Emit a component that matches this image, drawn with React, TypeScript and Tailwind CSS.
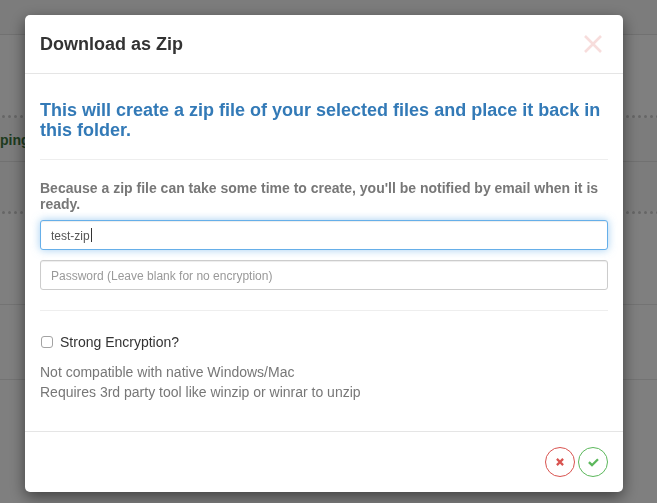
import React, { useState } from 'react';

function DottedRule() {
  return (
    <svg className="block w-full h-[3px]" aria-hidden="true">
      <defs>
        <pattern id="dots" width="6" height="3" patternUnits="userSpaceOnUse">
          <circle cx="3.5" cy="1.5" r="1.5" fill="#cccccc" />
        </pattern>
      </defs>
      <rect width="100%" height="3" fill="url(#dots)" />
    </svg>
  );
}

function FileListPage() {
  return (
    <div className="min-h-screen bg-white" aria-hidden="true">
      <div className="h-[35px] bg-[#f8f8f8] border-b border-[#e2e2e2]" />
      <div className="h-20" />
      <DottedRule />
      <div className="h-11 flex items-center bg-[#f9f9f9] border-b border-[#e2e2e2] text-sm font-bold text-[#3c763d]">
        ping
      </div>
      <div className="h-[49px] bg-[#f9f9f9]" />
      <DottedRule />
      <div className="h-[91px] border-b border-[#e7e7e7]" />
      <div className="h-[75px] border-b border-[#e7e7e7]" />
    </div>
  );
}

export default function App() {
  const [name, setName] = useState('test-zip');
  const [password, setPassword] = useState('');
  const [strong, setStrong] = useState(false);

  return (
    <div className="h-screen overflow-hidden font-['Liberation_Sans',Arial,sans-serif]">
      <FileListPage />
      <div className="fixed inset-0 overflow-hidden bg-black/50 pl-[25px] pr-[34px] pt-[15px]">
        <form
          role="dialog"
          aria-labelledby="zip-title"
          onSubmit={(e) => e.preventDefault()}
          className="bg-white rounded-[5px] shadow-[0_5px_15px_rgba(0,0,0,0.5)]"
        >
          <header className="flex items-center justify-between h-[59px] px-[15px] border-b border-[#e5e5e5]">
            <h4 id="zip-title" className="text-lg font-bold text-[#333333]">Download as Zip</h4>
            <button type="button" aria-label="Close" className="w-[30px] h-[30px] flex items-center justify-center">
              <svg width="18" height="18" viewBox="0 0 18 18" fill="none" stroke="#f7dddc" strokeWidth="2.6">
                <path d="M1 1 17 17M17 1 1 17" />
              </svg>
            </button>
          </header>

          <div className="px-[15px] pt-[26px] pb-[29px]">
            <h3 className="text-lg leading-5 font-bold text-[#337ab7]">
              This will create a zip file of your selected files and place it back in this folder.
            </h3>
            <hr className="mt-[19px] mb-5 border-[#eeeeee]" />
            <h5 className="mb-2 text-sm leading-4 font-bold text-[#777777]">
              Because a zip file can take some time to create, you'll be notified by email when it is ready.
            </h5>
            <div className="relative">
              <input
                type="text"
                aria-label="File name"
                value={name}
                onChange={(e) => setName(e.target.value)}
                className="block w-full h-[30px] px-2.5 pt-0.5 text-xs text-[#555555] bg-white border border-[#66afe9] rounded-[3px] outline-none shadow-[inset_0_1px_1px_rgba(0,0,0,0.075),0_0_8px_rgba(102,175,233,0.6)]"
              />
              {/* text caret, sits right after the typed name */}
              <div className="absolute inset-y-0 left-[11px] flex items-center text-xs pointer-events-none" aria-hidden="true">
                <span className="h-3.5 border-r border-[#333333] pr-px">
                  <span className="invisible">{name}</span>
                </span>
              </div>
            </div>
            <input
              type="password"
              aria-label="Password"
              placeholder="Password (Leave blank for no encryption)"
              value={password}
              onChange={(e) => setPassword(e.target.value)}
              className="block w-full h-[30px] mt-2.5 px-2.5 pt-0.5 text-xs text-[#555555] placeholder:text-[#999999] bg-white border border-[#cccccc] rounded-[3px] outline-none shadow-[inset_0_1px_1px_rgba(0,0,0,0.075)]"
            />
            <hr className="mt-5 mb-[21px] border-[#eeeeee]" />
            <label className="flex items-center gap-[7px] pl-px text-sm leading-5 text-[#333333]">
              <input
                type="checkbox"
                checked={strong}
                onChange={(e) => setStrong(e.target.checked)}
                className="appearance-none size-3 bg-white border border-[#a3a3a3] rounded-[3px] checked:bg-[#337ab7]"
              />
              Strong Encryption?
            </label>
            <p className="mt-2.5 text-sm leading-5 text-[#777777]">
              Not compatible with native Windows/Mac
              <br />
              Requires 3rd party tool like winzip or winrar to unzip
            </p>
          </div>

          <footer className="flex justify-end gap-[3px] p-[15px] border-t border-[#e5e5e5]">
            <button type="button" aria-label="Cancel" className="size-[30px] flex items-center justify-center rounded-full border border-[#d9534f]">
              <svg width="8" height="8" viewBox="0 0 8 8" fill="none" stroke="#d9534f" strokeWidth="2.2">
                <path d="M.9.9 7.1 7.1M7.1.9.9 7.1" />
              </svg>
            </button>
            <button type="submit" aria-label="Create zip" className="size-[30px] flex items-center justify-center rounded-full border border-[#5cb85c]">
              <svg width="11" height="9" viewBox="0 0 11 9" fill="none" stroke="#5cb85c" strokeWidth="2.3">
                <path d="M.9 4.2 4 7.2 10 1.2" />
              </svg>
            </button>
          </footer>
        </form>
      </div>
    </div>
  );
}
